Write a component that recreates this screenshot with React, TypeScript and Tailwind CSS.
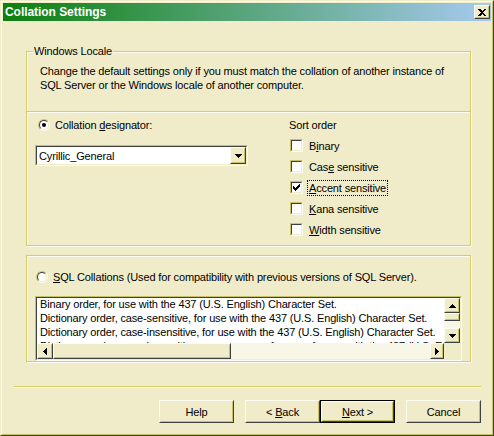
import type { ReactNode } from "react";

// classic 3D edges, olive/beige scheme
function Raised({ className = "", children }: { className?: string; children?: ReactNode }) {
  return (
    <div
      className={`border border-t-[#FDFCF2] border-l-[#FDFCF2] border-r-[#404040] border-b-[#404040] bg-[#F0ECCA] ${className}`}
    >
      <div className="flex h-full w-full items-center justify-center border border-t-[#F0ECCA] border-l-[#F0ECCA] border-r-[#C9C16A] border-b-[#C9C16A]">
        {children}
      </div>
    </div>
  );
}

function Sunken({ className = "", children }: { className?: string; children?: ReactNode }) {
  return (
    <div
      className={`border border-t-[#C9C16A] border-l-[#C9C16A] border-r-[#FDFCF2] border-b-[#FDFCF2] ${className}`}
    >
      <div className="h-full w-full border border-t-[#404040] border-l-[#404040] border-r-[#F0ECCA] border-b-[#F0ECCA] bg-white">
        {children}
      </div>
    </div>
  );
}

function Radio({ checked }: { checked?: boolean }) {
  return (
    <div className="h-[12px] w-[12px] shrink-0 rounded-full border border-t-[#C9C16A] border-l-[#C9C16A] border-r-[#FDFCF2] border-b-[#FDFCF2]">
      <div className="flex h-full w-full items-center justify-center rounded-full border border-t-[#404040] border-l-[#404040] border-r-[#F0ECCA] border-b-[#F0ECCA] bg-white">
        {checked ? <div className="h-[4px] w-[4px] rounded-full bg-black" /> : null}
      </div>
    </div>
  );
}

function Check({ checked }: { checked?: boolean }) {
  return (
    <div className="h-[13px] w-[13px] shrink-0 border border-t-[#C9C16A] border-l-[#C9C16A] border-r-[#FDFCF2] border-b-[#FDFCF2]">
      <div className="flex h-full w-full items-center justify-center border border-t-[#404040] border-l-[#404040] border-r-[#F0ECCA] border-b-[#F0ECCA] bg-white">
        {checked ? (
          <svg width="7" height="7" viewBox="0 0 7 7" shapeRendering="crispEdges">
            <rect x="0" y="2" width="1" height="3" fill="#000" />
            <rect x="1" y="3" width="1" height="3" fill="#000" />
            <rect x="2" y="4" width="1" height="3" fill="#000" />
            <rect x="3" y="3" width="1" height="3" fill="#000" />
            <rect x="4" y="2" width="1" height="3" fill="#000" />
            <rect x="5" y="1" width="1" height="3" fill="#000" />
            <rect x="6" y="0" width="1" height="3" fill="#000" />
          </svg>
        ) : null}
      </div>
    </div>
  );
}

function Arrow({ dir }: { dir: "up" | "down" | "left" | "right" }) {
  const pts = {
    up: "3.5,0 7,4 0,4",
    down: "0,0 7,0 3.5,4",
    left: "4,0 4,7 0,3.5",
    right: "0,0 4,3.5 0,7",
  }[dir];
  const vertical = dir === "up" || dir === "down";
  return (
    <svg
      width={vertical ? 7 : 4}
      height={vertical ? 4 : 7}
      viewBox={vertical ? "0 0 7 4" : "0 0 4 7"}
      shapeRendering="crispEdges"
    >
      <polygon points={pts} fill="#000" />
    </svg>
  );
}

const sortOptions = [
  { pre: "B", key: "i", post: "nary", checked: false },
  { pre: "Cas", key: "e", post: " sensitive", checked: false },
  { pre: "", key: "A", post: "ccent sensitive", checked: true },
  { pre: "", key: "K", post: "ana sensitive", checked: false },
  { pre: "", key: "W", post: "idth sensitive", checked: false },
];

const sqlCollations = [
  "Binary order, for use with the 437 (U.S. English) Character Set.",
  "Dictionary order, case-sensitive, for use with the 437 (U.S. English) Character Set.",
  "Dictionary order, case-insensitive, for use with the 437 (U.S. English) Character Set.",
  "Dictionary order, case-insensitive, uppercase preference, for use with the 437 (U.S. English) Character Set.",
];

export default function App() {
  return (
    <div className="h-[436px] w-[494px] overflow-hidden border border-t-[#F0ECCA] border-l-[#F0ECCA] border-r-[#404040] border-b-[#404040] bg-[#F0ECCA] font-['Liberation_Sans',Arial,sans-serif] text-[11px] leading-[14px] tracking-[-0.15px] text-black">
      <div className="flex h-full flex-col border border-t-[#FDFCF2] border-l-[#FDFCF2] border-r-[#C9C16A] border-b-[#C9C16A] p-px">
        {/* title bar */}
        <div className="flex h-[18px] shrink-0 items-center bg-[linear-gradient(to_right,#0C800C,#A6CAF0)] pl-[2px] pr-[1px]">
          <span className="whitespace-nowrap text-[12px] font-bold tracking-[-0.05px] text-white">Collation Settings</span>
          <Raised className="ml-auto h-[14px] w-[16px]">
            <svg width="8" height="7" viewBox="0 0 8 7" shapeRendering="crispEdges">
              <path d="M0 0h2l2 2 2-2h2v1L5 3.5 8 6v1H6L4 5 2 7H0V6l3-2.5L0 1z" fill="#000" />
            </svg>
          </Raised>
        </div>

        {/* Windows Locale group */}
        <div className="relative ml-[23px] mt-[30px] flex h-[195px] w-[445px] flex-col border border-[#D4CD6A] shadow-[inset_1px_1px_0_#FDFCF2,1px_1px_0_#FDFCF2]">
          <span className="absolute left-[6px] top-[-8px] whitespace-nowrap bg-[#F0ECCA] px-[1px]">Windows Locale</span>
          <div className="h-[59px] whitespace-nowrap pl-[13px] pt-[12px]">
            <div>Change the default settings only if you must match the collation of another instance of</div>
            <div>SQL Server or the Windows locale of another computer.</div>
          </div>
          <div className="h-[2px] border-t border-b border-t-[#D4CD6A] border-b-[#FDFCF2]" />
          <div className="flex flex-1">
            <div className="w-[262px] pl-[8px] pt-[5px]">
              <div className="flex h-[14px] items-center pl-[3px]">
                <Radio checked />
                <span className="ml-[5px] whitespace-nowrap">
                  Collation <u>d</u>esignator:
                </span>
              </div>
              <Sunken className="mt-[13px] h-[21px] w-[213px]">
                <div className="flex h-full items-center">
                  <span className="flex-1 pl-[2px]">Cyrillic_General</span>
                  <Raised className="h-[17px] w-[16px]">
                    <Arrow dir="down" />
                  </Raised>
                </div>
              </Sunken>
            </div>
            <div className="pt-[5px]">
              <div className="h-[14px] whitespace-nowrap">Sort order</div>
              <div className="mt-[7px] flex flex-col gap-[8px] pl-[1px]">
                {sortOptions.map((o) => (
                  <div key={o.post} className="flex h-[13px] items-center">
                    <Check checked={o.checked} />
                    <span
                      className={`ml-[4px] whitespace-nowrap border px-[1px] leading-[14px] ${
                        o.checked ? "border-dotted border-black" : "border-transparent"
                      }`}
                    >
                      {o.pre}
                      <u>{o.key}</u>
                      {o.post}
                    </span>
                  </div>
                ))}
              </div>
            </div>
          </div>
        </div>

        {/* SQL Collations group */}
        <div className="ml-[23px] mt-[9px] h-[107px] w-[445px] border border-[#D4CD6A] shadow-[inset_1px_1px_0_#FDFCF2,1px_1px_0_#FDFCF2]">
          <div className="mt-[14px] flex h-[14px] items-center pl-[9px]">
            <Radio />
            <span className="ml-[5px] whitespace-nowrap">
              <u>S</u>QL Collations (Used for compatibility with previous versions of SQL Server).
            </span>
          </div>
          <Sunken className="ml-[8px] mt-[12px] h-[65px] w-[427px]">
            <div className="flex h-full flex-col">
              <div className="flex h-[45px]">
                <div className="flex-1 overflow-hidden whitespace-nowrap pl-[3px]">
                  <div className="-mt-[1px]">
                    {sqlCollations.map((s) => (
                      <div key={s}>{s}</div>
                    ))}
                  </div>
                </div>
                <div className="flex w-[16px] flex-col bg-[#F8F6E6]">
                  <Raised className="h-[15px] w-[16px]">
                    <Arrow dir="up" />
                  </Raised>
                  <Raised className="h-[8px] w-[16px]" />
                  <div className="flex-1" />
                  <Raised className="h-[15px] w-[16px]">
                    <Arrow dir="down" />
                  </Raised>
                </div>
              </div>
              <div className="flex h-[16px]">
                <div className="flex flex-1 bg-[#F8F6E6]">
                  <Raised className="h-[16px] w-[16px]">
                    <Arrow dir="left" />
                  </Raised>
                  <Raised className="h-[16px] w-[178px]" />
                  <div className="flex-1" />
                  <Raised className="h-[16px] w-[14px]">
                    <Arrow dir="right" />
                  </Raised>
                </div>
                <div className="w-[16px] bg-[#F0ECCA]" />
              </div>
            </div>
          </Sunken>
        </div>

        {/* bottom separator */}
        <div className="ml-[11px] mt-[24px] h-[2px] w-[467px] border-t border-b border-t-[#D4CD6A] border-b-[#FDFCF2]" />

        {/* buttons */}
        <div className="ml-[156px] mt-[12px] flex">
          <Raised className="h-[23px] w-[75px]">
            <span>Help</span>
          </Raised>
          <Raised className="ml-[11px] h-[23px] w-[75px]">
            <span className="whitespace-pre">
              &lt; <u>B</u>ack
            </span>
          </Raised>
          <div className="h-[23px] w-[75px] border border-black">
            <Raised className="h-full w-full">
              <span className="whitespace-pre">
                <u>N</u>ext &gt;
              </span>
            </Raised>
          </div>
          <Raised className="ml-[11px] h-[23px] w-[75px]">
            <span>Cancel</span>
          </Raised>
        </div>
      </div>
    </div>
  );
}
